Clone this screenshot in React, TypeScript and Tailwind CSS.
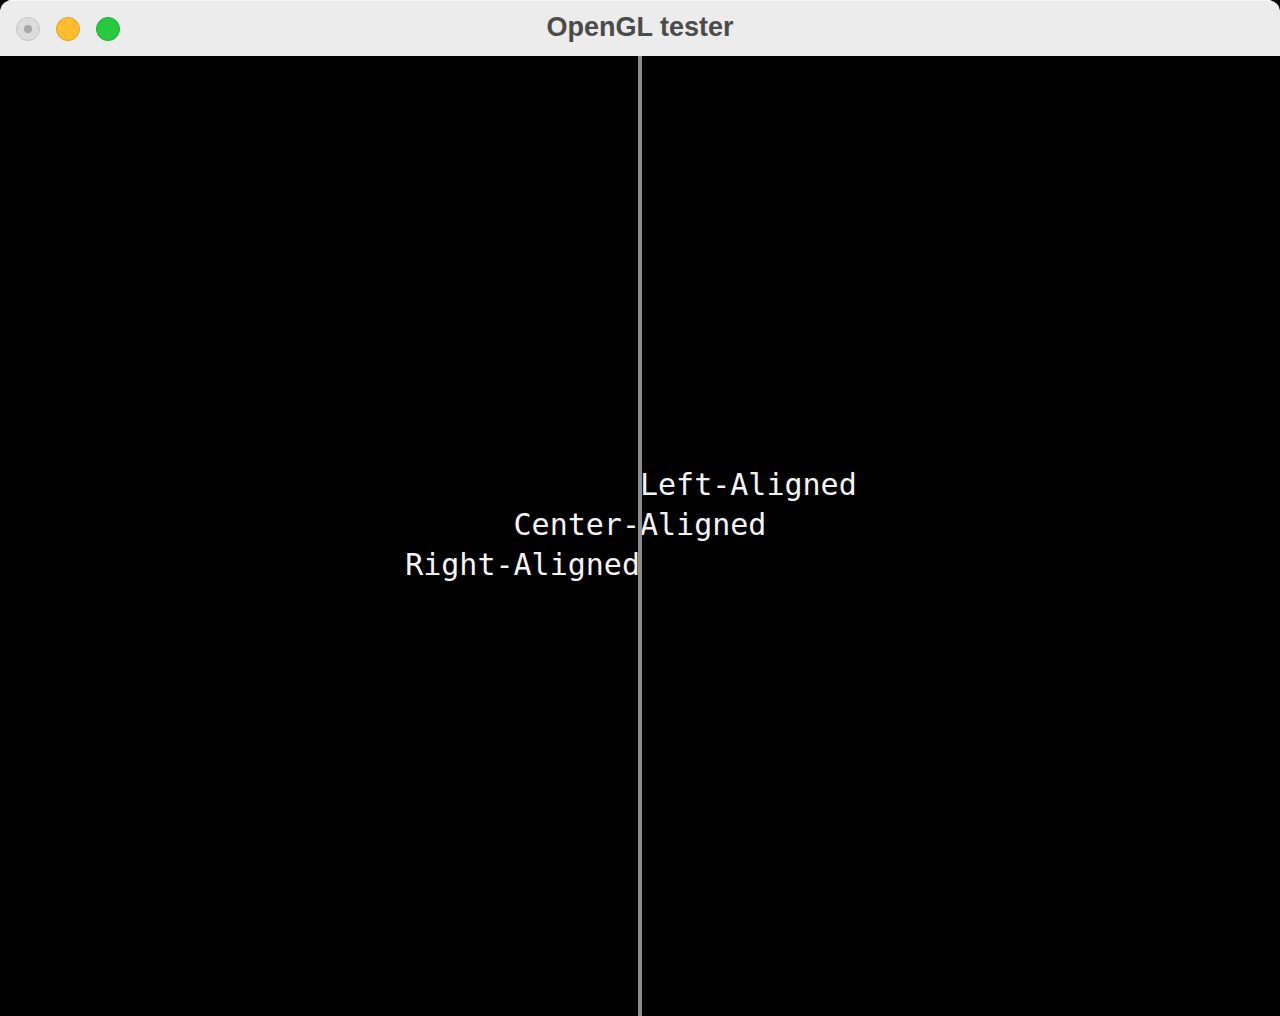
export default function App() {
  return (
    <div className="w-[1280px] h-[1016px] bg-black">
      <div className="w-full h-full rounded-[12px] overflow-hidden flex flex-col bg-black">
        {/* Title bar */}
        <div className="relative h-[56px] flex-shrink-0 bg-[#ececec] border-t border-[#f8f8f8] flex items-center">
          <div className="flex items-center gap-[16px] pl-[16px]">
            <div className="w-[24px] h-[24px] rounded-full bg-[#dcdcdc] border border-[#c4c4c4] flex items-center justify-center">
              <div className="w-[8px] h-[8px] rounded-full bg-[#a9a9a9]" />
            </div>
            <div className="w-[24px] h-[24px] rounded-full bg-[#febc2e] border border-[#e1a325]" />
            <div className="w-[24px] h-[24px] rounded-full bg-[#28c840] border border-[#1fae33]" />
          </div>
          <div
            className="absolute inset-0 flex items-center justify-center text-[27px] font-bold text-[#4b4b4b] pointer-events-none pb-[2px]"
            style={{ fontFamily: '"Liberation Sans", Arial, sans-serif' }}
          >
            OpenGL tester
          </div>
        </div>

        {/* GL canvas */}
        <div className="relative flex-1 bg-black">
          <div className="absolute top-0 bottom-0 left-[638px] w-[3.5px] bg-[#8c8c8c] z-10" />
          <div
            className="grid grid-cols-2 pt-[409px] text-[30px] leading-[40px] text-[#f4f4f4] font-medium"
            style={{ fontFamily: '"DejaVu Sans Mono", "Liberation Mono", monospace' }}
          >
            <div />
            <div className="text-left">Left-Aligned</div>
            <div className="col-span-2 text-center">Center-Aligned</div>
            <div className="text-right">Right-Aligned</div>
            <div />
          </div>
        </div>
      </div>
    </div>
  )
}
